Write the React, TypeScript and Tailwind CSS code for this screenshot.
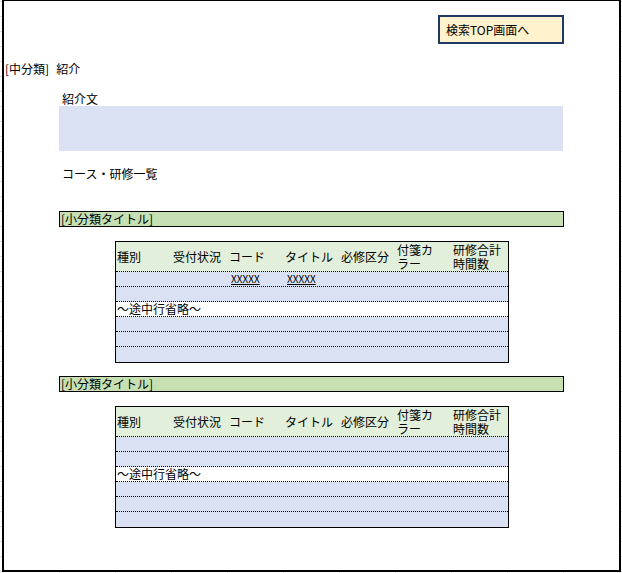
import React from "react";

const headers: { lines: string[] }[] = [
  { lines: ["種別"] },
  { lines: ["受付状況"] },
  { lines: ["コード"] },
  { lines: ["タイトル"] },
  { lines: ["必修区分"] },
  { lines: ["付箋カ", "ラー"] },
  { lines: ["研修合計", "時間数"] },
];

function Row({ kind, last }: { kind: "blue" | "white" | "xx" | "omit"; last?: boolean }) {
  const bg = kind === "omit" ? "bg-white" : "bg-[#d9e1f2]";
  return (
    <div
      className={`grid grid-cols-[repeat(7,56px)] h-[15px] ${bg} ${
        last ? "" : "border-b border-dotted border-black"
      }`}
    >
      {kind === "omit" && (
        <div className="col-span-7 pl-[1px] leading-[14px] whitespace-nowrap">〜途中行省略〜</div>
      )}
      {kind === "xx" && (
        <>
          <div />
          <div />
          <div className="pl-[3px] leading-[14px] text-[10px] underline">XXXXX</div>
          <div className="pl-[3px] leading-[14px] text-[10px] underline">XXXXX</div>
          <div />
          <div />
          <div />
        </>
      )}
    </div>
  );
}

function CourseTable({ first }: { first: boolean }) {
  return (
    <div className="ml-[111px] w-[394px] border border-black">
      <div className="grid grid-cols-[repeat(7,56px)] h-[30px] bg-[#e2efda] border-b border-dotted border-black">
        {headers.map((h, i) => (
          <div key={i} className="flex flex-col justify-center pl-[1px] leading-[14px] whitespace-nowrap">
            {h.lines.map((l, j) => (
              <span key={j} className="block h-[14px] leading-[14px]">
                {l}
              </span>
            ))}
          </div>
        ))}
      </div>
      <Row kind={first ? "xx" : "blue"} />
      <Row kind="blue" />
      <Row kind="omit" />
      <Row kind="blue" />
      <Row kind="blue" />
      <Row kind="blue" last />
    </div>
  );
}

function SubTitle() {
  return (
    <div className="ml-[55px] w-[505px] h-[16px] border border-black bg-[#c6e0b4] pl-[1px] leading-[14px]">
      [小分類タイトル]
    </div>
  );
}

export default function App() {
  return (
    <div
      className="w-[622px] h-[573px] pl-[2px] overflow-hidden bg-white [background-image:linear-gradient(to_right,#dadada_1px,transparent_1px),linear-gradient(to_bottom,#dadada_1px,transparent_1px)] [background-size:56px_15px] [background-position:3px_1px] font-['Noto_Sans_CJK_JP','Noto_Sans_CJK_SC',sans-serif] text-[12px] text-black"
    >
      <div className="w-[619px] h-[572px] bg-white border-black border-l-2 border-r-2 border-b-2 border-t flex flex-col">
        <div className="ml-[434px] mt-[14px] w-[126px] h-[29px] border-2 border-[#203864] bg-[#fff2cc] flex items-center pl-[6px] whitespace-nowrap">
          検索TOP画面へ
        </div>
        <div className="mt-[17px] ml-[1px] h-[15px] leading-[15px] whitespace-nowrap flex">
          <span>[中分類]</span>
          <span className="ml-[7px]">紹介</span>
        </div>
        <div className="mt-[15px] ml-[58px] h-[15px] leading-[15px]">紹介文</div>
        <div className="ml-[55px] w-[504px] h-[45px] bg-[#d9e1f2]" />
        <div className="mt-[15px] ml-[58px] h-[15px] leading-[15px]">コース・研修一覧</div>
        <div className="mt-[30px]">
          <SubTitle />
        </div>
        <div className="mt-[14px]">
          <CourseTable first />
        </div>
        <div className="mt-[13px]">
          <SubTitle />
        </div>
        <div className="mt-[14px]">
          <CourseTable first={false} />
        </div>
      </div>
    </div>
  );
}
